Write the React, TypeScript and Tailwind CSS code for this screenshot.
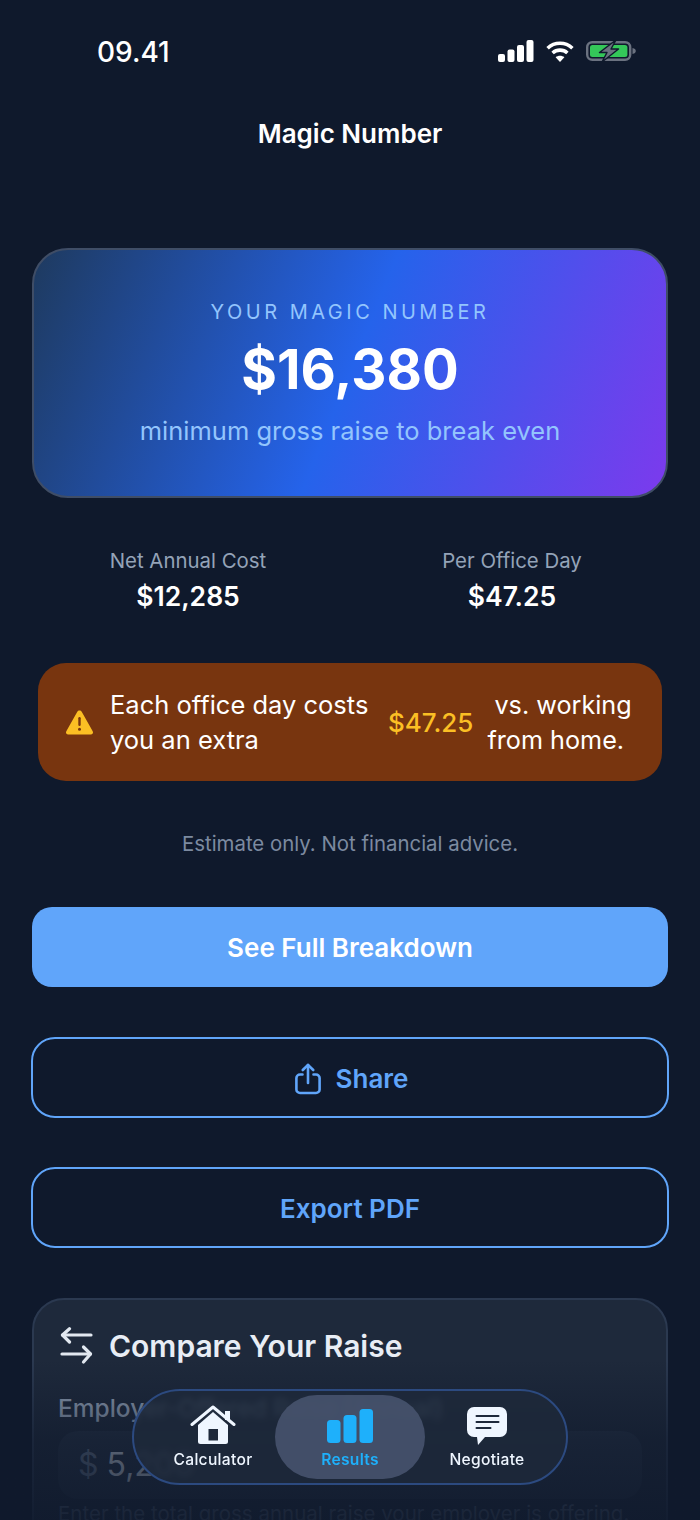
function SignalIcon() {
  return (
    <svg width="36" height="22" viewBox="0 0 36 22" fill="#fff">
      <rect x="0" y="14" width="7" height="8" rx="2" />
      <rect x="9.5" y="9.5" width="7" height="12.5" rx="2" />
      <rect x="19" y="5" width="7" height="17" rx="2" />
      <rect x="28.5" y="0" width="7" height="22" rx="2" />
    </svg>
  );
}

function WifiIcon() {
  return (
    <svg width="28" height="21" viewBox="0 0 28 21" fill="none" stroke="#fff" strokeWidth="3.6">
      <path d="M1.6 7.2C8.6 0.6 19.4 0.6 26.4 7.2" />
      <path d="M6.6 12C10.8 8.2 17.2 8.2 21.4 12" />
      <path d="M14 21 9.6 16.2C12 14.2 16 14.2 18.4 16.2Z" fill="#fff" stroke="none" />
    </svg>
  );
}

function BatteryIcon() {
  return (
    <svg width="50" height="22" viewBox="0 0 50 22" fill="none">
      <rect x="1.2" y="2.2" width="43" height="17.6" rx="5" stroke="#6b7280" strokeWidth="2.4" />
      <rect x="4" y="5" width="37.4" height="12" rx="2.5" fill="#34c759" />
      <path d="M46.500 8c2.200.4 3.300 1.400 3.300 3s-1.100 2.600-3.300 3z" fill="#6b7280" />
      <path d="M30 0 13.500 12.500H21L16 22l16.500-13H25z" fill="#6b7280" stroke="#0f192c" strokeWidth="1.400" strokeLinejoin="round" />
    </svg>
  );
}

function StatusBar() {
  return (
    <div className="flex h-[62px] items-center justify-between pt-[40px] pl-[97px] pr-[64px]">
      <span className="mt-[2px] text-[28px] leading-[30px] font-medium text-white">09.41</span>
      <div className="flex items-center gap-3">
        <SignalIcon />
        <WifiIcon />
        <BatteryIcon />
      </div>
    </div>
  );
}

function StatBlock({ label, value }: { label: string; value: string }) {
  return (
    <div className="flex flex-col items-center">
      <span className="text-[20.400px] leading-[28px] text-[#94a3b8]">{label}</span>
      <span className="mt-1 text-[26.500px] leading-[34px] font-semibold text-white">{value}</span>
    </div>
  );
}

function WarningIcon() {
  return (
    <svg width="29" height="26" viewBox="0 0 29 26" className="shrink-0">
      <path
        d="M14.500 1.500c.9 0 1.700.5 2.200 1.300l11 19.400c.9 1.600-.2 3.300-2 3.300H3.300c-1.800 0-2.900-1.700-2-3.300l11-19.400c.5-.8 1.300-1.300 2.200-1.300z"
        fill="#fbbf24"
      />
      <rect x="13.300" y="8" width="2.400" height="9" rx="1.200" fill="#78350f" />
      <circle cx="14.500" cy="20.200" r="1.500" fill="#78350f" />
    </svg>
  );
}

function ShareIcon() {
  return (
    <svg width="26" height="32" viewBox="0 0 26 32" fill="none" stroke="#60a5fa" strokeWidth="2.600" strokeLinecap="round" strokeLinejoin="round">
      <path d="M7.500 11.500H5a3.600 3.600 0 0 0-3.600 3.600v11.300A3.600 3.600 0 0 0 5 30h16a3.600 3.600 0 0 0 3.600-3.600V15.100a3.600 3.600 0 0 0-3.600-3.600h-2.500" />
      <path d="M13 20V2" />
      <path d="M7.800 7 13 1.800 18.200 7" />
    </svg>
  );
}

function SwapIcon() {
  return (
    <svg width="33" height="38" viewBox="0 0 33 38" fill="none" stroke="#e2e8f0" strokeWidth="3.200" strokeLinecap="round" strokeLinejoin="round" className="ml-[2px] shrink-0">
      <path d="M31 8H2.500" />
      <path d="M9.500 1.800 2.500 8l7 7" />
      <path d="M2 27h28.500" />
      <path d="M23.500 20l7 7-7 8" />
    </svg>
  );
}

function HomeIcon() {
  return (
    <svg width="46" height="40" viewBox="0 0 46 40" className="shrink-0">
      <path d="M8 20 23 7l15 13v16.500a2.500 2.500 0 0 1-2.500 2.500h-25A2.500 2.500 0 0 1 8 36.500z" fill="#eff6ff" />
      <rect x="35" y="6" width="5" height="9" fill="#eff6ff" />
      <path d="M2 19.500 23 2l21 17.500" fill="none" stroke="#eff6ff" strokeWidth="3" strokeLinecap="round" strokeLinejoin="round" />
      <rect x="18.500" y="24" width="9.500" height="11.500" fill="#1e293b" />
    </svg>
  );
}

function BarsIcon() {
  return (
    <svg width="46" height="34" viewBox="0 0 46 34" fill="#1eb0fb" className="mb-[2px] shrink-0">
      <rect x="0" y="11" width="13.500" height="23" rx="3.500" />
      <rect x="16.500" y="6" width="13" height="28" rx="3.500" />
      <rect x="32.500" y="0" width="13.500" height="34" rx="3.500" />
    </svg>
  );
}

function ChatIcon() {
  return (
    <svg width="40" height="38" viewBox="0 0 40 38" className="shrink-0">
      <path d="M7 0h26a7 7 0 0 1 7 7v16a7 7 0 0 1-7 7H18l-7 8-1-8H7a7 7 0 0 1-7-7V7a7 7 0 0 1 7-7z" fill="#eff6ff" />
      <path d="M9.500 9h22M9.500 15h22M9.500 21h14" stroke="#1e293b" strokeWidth="2" strokeLinecap="round" />
    </svg>
  );
}

function NavItem({ label, active, icon }: { label: string; active?: boolean; icon: React.ReactNode }) {
  return (
    <div className="relative flex h-full w-[137px] flex-col items-center">
      {active && <div className="absolute inset-y-0 -inset-x-[6.500px] rounded-full bg-[#47536e]/90" />}
      <div className="relative flex h-[50px] items-end">{icon}</div>
      <span className={`relative mt-[5px] text-[15.600px] leading-[20px] tracking-[0.3px] ${active ? 'font-semibold text-[#1eb0fb]' : 'font-medium text-[#eff6ff]'}`}>
        {label}
      </span>
    </div>
  );
}

export default function App() {
  return (
    <div className="relative h-[1520px] w-[700px] overflow-hidden bg-[#0f192c] font-['Inter',sans-serif]">
      <StatusBar />

      <h1 className="mt-[55px] text-center text-[26px] leading-[34px] font-semibold text-white">Magic Number</h1>

      <div className="mx-8 mt-[97px] flex h-[250px] flex-col items-center rounded-[36px] border-2 border-[#3f4d66] bg-[linear-gradient(112deg,#1e3a5f_0%,#2563eb_50%,#7c3aed_100%)]">
        <span className="mt-[48px] text-[20px] leading-[28px] tracking-[3.500px] text-[#93c5fd]">YOUR MAGIC NUMBER</span>
        <span className="mt-[12px] text-[54.500px] leading-[62px] font-bold text-white">$16,380</span>
        <span className="mt-[14px] text-[25.500px] leading-[34px] text-[#93c5fd]">minimum gross raise to break even</span>
      </div>

      <div className="mx-8 mt-[49px] grid grid-cols-2 gap-3">
        <StatBlock label="Net Annual Cost" value="$12,285" />
        <StatBlock label="Per Office Day" value="$47.25" />
      </div>

      <div className="mx-[38px] mt-[50px] flex h-[118px] items-center rounded-[28px] bg-[#78350f] pl-[27px]">
        <WarningIcon />
        <p className="ml-4 w-[270px] shrink-0 text-[25.500px] leading-[35px] text-white">Each office day costs you an extra</p>
        <span className="ml-[8px] shrink-0 text-[26px] leading-[35px] font-medium text-[#fbbf24]">$47.25</span>
        <p className="ml-[14px] w-[148px] shrink-0 pt-[2px] indent-[7px] text-[25.200px] leading-[35px] text-white">vs. working from home.</p>
      </div>

      <p className="mt-[49px] text-center text-[20.400px] leading-[28px] text-[#7c8aa0]">Estimate only. Not financial advice.</p>

      <div className="mx-8 mt-[49px] flex flex-col gap-[49px]">
        <button type="button" className="mb-px h-[80px] rounded-[20px] bg-[#60a5fa] text-[26px] font-semibold text-white">
          See Full Breakdown
        </button>
        <button type="button" className="-mx-px flex h-[81px] items-center justify-center gap-[15px] rounded-[24px] border-[2.500px] border-[#60a5fa] pt-[2px] pl-[3px] text-[26px] font-semibold text-[#60a5fa]">
          <ShareIcon />
          Share
        </button>
        <button type="button" className="-mx-px h-[81px] rounded-[24px] border-[2.500px] border-[#60a5fa] pt-px text-[26px] font-semibold text-[#60a5fa]">
          Export PDF
        </button>
      </div>

      <div className="mx-8 mt-[50px] rounded-[32px] border-2 border-[#2b3950] bg-[#1e293b] px-[24px] pt-[26px] pb-10">
        <div className="flex items-center gap-4">
          <SwapIcon />
          <h2 className="text-[30px] leading-[40px] font-semibold text-[#e8edf5]">Compare Your Raise</h2>
        </div>
        <p className="mt-[25px] text-[24.500px] leading-[34px] font-medium whitespace-nowrap text-[#94a3b8]">Employer-Offered Raise (Annual)</p>
        <div className="mt-[6px] flex h-[68px] items-center gap-2 rounded-[20px] bg-[#263245] px-5">
          <span className="text-[32px] text-[#64748b]">$</span>
          <span className="text-[32px] text-[#cbd5e1]">5,200</span>
        </div>
        <p className="text-[20.500px] leading-[30px] whitespace-nowrap text-[#55637a]">Enter the total gross annual raise your employer is offering.</p>
      </div>

      {/* 하단 페이드 + 떠 있는 탭바 */}
      <div className="pointer-events-none absolute inset-x-0 bottom-0 h-[160px] bg-gradient-to-b from-[#0f192c]/0 via-[#0f192c]/60 to-[#0f192c]/85" />
      <nav className="absolute bottom-[35px] left-[132px] flex h-[96px] w-[436px] justify-center rounded-full border-2 border-[#2c4a80] bg-[#1e293b]/80 py-1 backdrop-blur-[3px]">
        <NavItem label="Calculator" icon={<HomeIcon />} />
        <NavItem label="Results" active icon={<BarsIcon />} />
        <NavItem label="Negotiate" icon={<ChatIcon />} />
      </nav>
    </div>
  );
}
